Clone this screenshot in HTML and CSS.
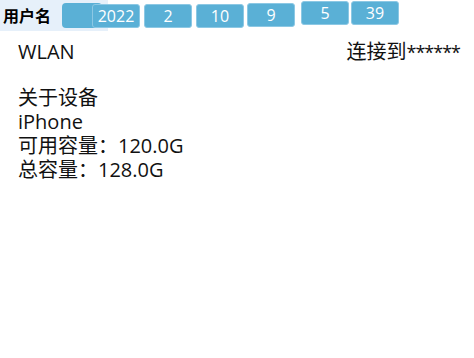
FILE: index.html
```html
<!DOCTYPE html>
<html lang="zh">
<head>
<meta charset="utf-8">
<link rel="stylesheet" href="styles.css">
</head>
<body>
<div class="top">
  <div class="band">
    <span class="label">用户名</span>
    <span class="pill"></span>
  </div>
  <div class="btns">
    <span class="btn b1">2022</span>
    <span class="btn b2">2</span>
    <span class="btn b3">10</span>
    <span class="btn b4">9</span>
    <span class="btn b5">5</span>
    <span class="btn b6">39</span>
  </div>
</div>
<div class="content">
  <div class="row">
    <span>WLAN</span>
    <span>连接到<span class="stars">******</span></span>
  </div>
  <div class="about">
    <div>关于设备</div>
    <div>iPhone</div>
    <div>可用容量：120.0G</div>
    <div>总容量：128.0G</div>
  </div>
</div>
</body>
</html>
```
FILE: styles.css
```css
html, body {
  margin: 0;
  padding: 0;
  background: #fff;
  font-family: "Open Sans", "Noto Sans CJK SC", sans-serif;
  color: #111;
}
.top {
  display: flex;
  align-items: flex-start;
  height: 31px;
}
.band {
  width: 108px;
  height: 31px;
  background: #e6f0fa;
  display: flex;
  align-items: center;
  flex-shrink: 0;
}
.label {
  margin-left: 3px;
  margin-top: -2px;
  font-family: "Noto Sans CJK SC", sans-serif;
  font-weight: bold;
  font-size: 16px;
  color: #000;
}
.pill {
  margin-left: 11px;
  width: 40px;
  height: 25px;
  background: #5ab0d6;
  border-radius: 4px;
}
.btns {
  display: flex;
  align-items: flex-start;
  margin-left: -16px;
  position: relative;
}
.btn {
  box-sizing: border-box;
  width: 48px;
  height: 24px;
  background: #5ab0d6;
  border: 1px solid #8cc8e4;
  border-radius: 3px;
  color: #fff;
  font-size: 16px;
  display: flex;
  align-items: center;
  justify-content: center;
}
.b1 { margin-top: 4px; }
.b2 { margin-top: 4px; margin-left: 4px; }
.b3 { margin-top: 4px; margin-left: 4px; }
.b4 { margin-top: 3px; margin-left: 3px; }
.b5 { margin-top: 1px; margin-left: 6px; }
.b6 { margin-top: 1px; margin-left: 2px; }
.content {
  padding: 9px 14px 0 18px;
  font-size: 20px;
  line-height: 24px;
}
.row {
  display: flex;
  justify-content: space-between;
}
.stars {
  font-size: 18px;
  letter-spacing: -1px;
}
.about {
  margin-top: 22px;
}
```
